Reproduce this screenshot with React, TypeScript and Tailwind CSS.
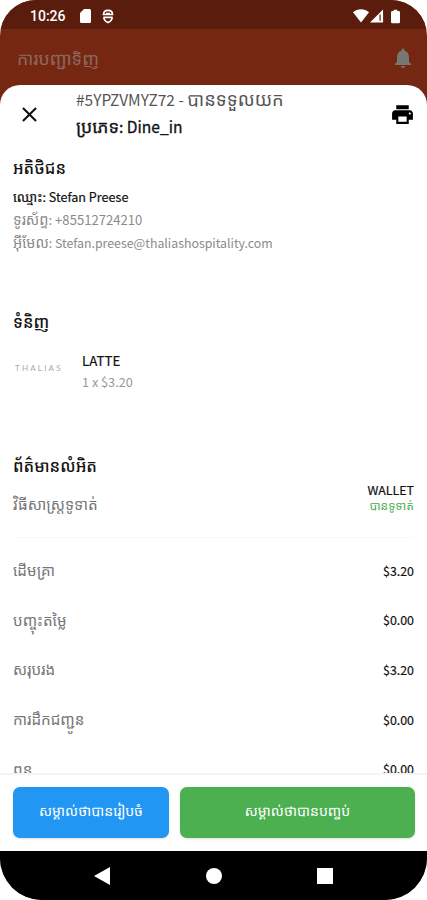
import React from "react";
import { MdNotifications, MdPrint, MdClose } from "react-icons/md";

interface SummaryRow {
  label: string;
  value: string;
}

const rows: SummaryRow[] = [
  { label: "ដើមគ្រា", value: "$3.20" },
  { label: "បញ្ចុះតម្លៃ", value: "$0.00" },
  { label: "សរុបរង", value: "$3.20" },
  { label: "ការដឹកជញ្ជូន", value: "$0.00" },
  { label: "ពន្ធ", value: "$0.00" },
];

const StatusBar: React.FC = () => (
  <div className="flex h-[29px] shrink-0 items-center bg-[#5a1d0d] pl-[30px] pr-[27px] pt-[3px] text-white">
    <span className="w-[37px] whitespace-nowrap font-['Roboto'] text-[14px] font-medium leading-4">10:26</span>
    <svg className="ml-[13px] h-[14px] w-[11px]" viewBox="0 0 11 14" fill="currentColor">
      <path d="M4 0h5.500Q11 0 11 1.500v11q0 1.500-1.500 1.500h-8Q0 14 0 12.500V4z" />
    </svg>
    <svg className="ml-[11px] h-[15px] w-[12px]" viewBox="0 0 12 15" fill="none" stroke="currentColor" strokeWidth="1.7">
      <path d="M1.5 5.5C1.5 2 3.500 1.300 6 1.300s4.500.7 4.500 4.200zM1.500 8.300h9M1.800 8.300c.2 3 2 4.300 4.200 5.300 2.200-1 4-2.300 4.200-5.300M4 4.600h4" />
    </svg>
    <svg className="ml-auto h-[14px] w-[16px]" viewBox="0 0 16 14" fill="currentColor">
      <path d="M0 3.200C4.500-.8 11.500-.8 16 3.200L8 13.500z" />
    </svg>
    <svg className="ml-px h-[14px] w-[14px]" viewBox="0 0 15 14">
      <path d="M0 14L14 0v14z" fill="currentColor" />
      <path d="M10.800 5.500v6.500" stroke="#5a1d0d" strokeWidth="1.300" />
    </svg>
    <svg className="ml-[7px] h-[15px] w-[9px]" viewBox="0 0 10 15" fill="currentColor">
      <path d="M3 0h4v1.500h1.500Q10 1.500 10 3v10.500Q10 15 8.500 15h-7Q0 15 0 13.500V3q0-1.500 1.500-1.500H3z" />
    </svg>
  </div>
);

const NavBar: React.FC = () => (
  <div className="flex h-[49px] shrink-0 items-center bg-black pl-[94px] pr-[94px]">
    <svg className="h-[18px] w-[16px]" viewBox="0 0 16 18" fill="#fff">
      <path d="M0 9L16 0v18z" />
    </svg>
    <div className="ml-auto h-4 w-4 rounded-full bg-white" />
    <div className="ml-auto h-4 w-4 bg-white" />
  </div>
);

const App: React.FC = () => {
  return (
    <div className="h-[900px] w-[427px] overflow-hidden bg-white font-['Noto_Sans_CJK_SC','Noto_Sans_Khmer',sans-serif]">
      <div className="flex h-full flex-col overflow-hidden rounded-t-[36px] rounded-b-[42px] bg-[#762711]">
        <StatusBar />
        <div className="flex h-14 shrink-0 items-center justify-between pl-[17px] pr-[12px] text-[#8b6a60]">
          <h1 className="whitespace-nowrap text-[17.700px] leading-6">ការបញ្ជាទិញ</h1>
          <MdNotifications className="mt-0.5 h-[24px] w-[24px] text-[#777872]" />
        </div>

        <div className="flex min-h-0 flex-1 flex-col overflow-hidden rounded-t-[20px] bg-white">
          <div className="flex h-[58px] shrink-0 items-center pl-[17px] pr-[12px]">
            <MdClose className="h-[25px] w-[25px] text-[#111]" />
            <div className="-mt-[5px] ml-[34px] flex-1 whitespace-nowrap">
              <p className="h-[28px] text-[15.500px] leading-[28px] text-[#555]">
                #5YPZVMYZ72 - <span className="text-[18.300px]">បានទទួលយក</span>
              </p>
              <p className="h-[27px] text-[15.600px] leading-[28px] text-[#111] [-webkit-text-stroke:0.3px]">
                <span className="text-[17.600px]">ប្រភេទ</span>: Dine_in
              </p>
            </div>
            <MdPrint className="h-[25px] w-[25px] text-black" />
          </div>

          <div className="min-h-0 flex-1 overflow-hidden whitespace-nowrap px-[13px]">
            <h2 className="mt-[12px] text-[16.300px] font-medium leading-6 text-[#111]">អតិថិជន</h2>
            <div className="mt-[6px] text-[#8b8b8b]">
              <p className="h-[22px] text-[12.600px] leading-[23px] text-[#111] [-webkit-text-stroke:0.2px]">
                <span className="text-[13.300px]">ឈ្មោះ</span>: Stefan Preese
              </p>
              <p className="h-[23px] text-[13.100px] leading-[23px]">
                <span className="text-[14.500px]">ទូរស័ព្ទ</span>: +85512724210
              </p>
              <p className="h-[24px] text-[12.350px] leading-[23px]">
                <span className="text-[14.400px]">អ៊ីមែល</span>: Stefan.preese@thaliashospitality.com
              </p>
            </div>

            <h2 className="mt-[55px] text-[16.300px] font-medium leading-6 text-[#111]">ទំនិញ</h2>
            <div className="mt-[16px] flex h-[44px]">
              <div className="w-[69px] pl-[2px] pt-[12px] font-['Lato'] text-[8px] leading-[14px] tracking-[2.200px] text-[#aaa]">
                THALIAS
              </div>
              <div className="pt-px leading-[21px]">
                <p className="text-[13.300px] text-[#111] [-webkit-text-stroke:0.2px]">LATTE</p>
                <p className="text-[12.700px] text-[#999]">1 x $3.20</p>
              </div>
            </div>

            <h2 className="mt-[60px] text-[16.400px] font-medium leading-6 text-[#111]">ព័ត៌មានលំអិត</h2>
            <div className="flex h-[61px] justify-between border-b border-[#f8f8f8]">
              <span className="mt-[14px] text-[15.300px] leading-6 text-[#777]">វិធីសាស្ត្រទូទាត់</span>
              <div className="mt-[5px] text-right">
                <p className="h-[15px] text-[12.400px] leading-[17px] text-[#111] [-webkit-text-stroke:0.2px]">WALLET</p>
                <p className="text-[12px] leading-[16px] text-[#4caf50]">បានទូទាត់</p>
              </div>
            </div>
            <div className="pt-[8px]">
              {rows.map((row) => (
                <div key={row.label} className="flex h-[49.700px] items-center justify-between text-[#777]">
                  <span className="pb-[3px] text-[15.200px]">{row.label}</span>
                  <span className="text-[12.400px] text-[#111] [-webkit-text-stroke:0.2px]">{row.value}</span>
                </div>
              ))}
            </div>
          </div>

          <div className="flex h-[78px] shrink-0 gap-[11px] border-t-2 border-[#f5f5f5] bg-white pl-[13px] pr-[12px] pt-[12px] text-[14.100px] text-white">
            <button className="h-[51px] w-[156px] whitespace-nowrap rounded-[7px] bg-[#2196f3] pb-[3px] shadow">
              សម្គាល់ថាបានរៀបចំ
            </button>
            <button className="h-[51px] flex-1 whitespace-nowrap rounded-[7px] bg-[#4caf50] pb-[3px] shadow">
              សម្គាល់ថាបានបញ្ចប់
            </button>
          </div>
        </div>
        <NavBar />
      </div>
    </div>
  );
};

export default App;
